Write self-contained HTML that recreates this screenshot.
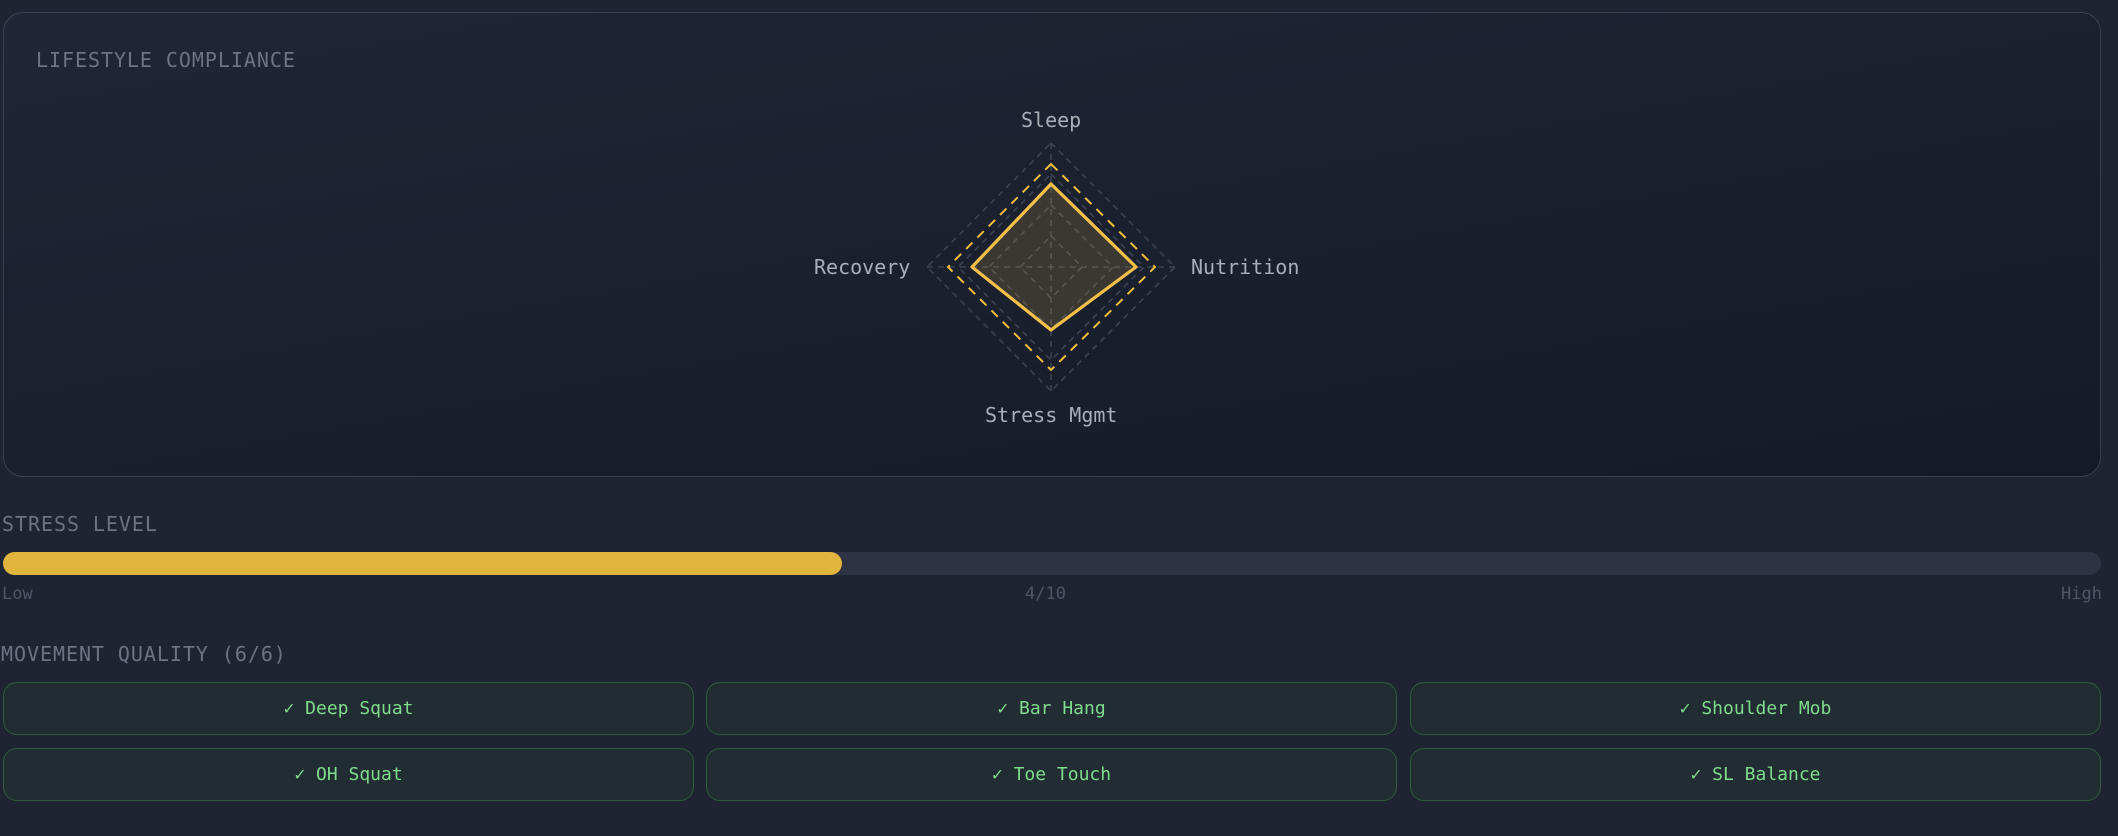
<!DOCTYPE html>
<html><head><meta charset="utf-8"><style>
*{box-sizing:border-box;margin:0;padding:0}
body{width:2118px;height:836px;background:#1f2432;font-family:"DejaVu Sans Mono","Liberation Mono",monospace;position:relative;overflow:hidden}
.panel{position:absolute;left:3px;top:12px;width:2098px;height:465px;border:1.5px solid #3a4050;border-radius:20px;background:linear-gradient(170deg,#202636 0%,#1a1f2d 60%,#161a26 100%)}
.t{position:absolute;font-size:20px;letter-spacing:0.95px;color:#6d7383;white-space:nowrap}
.lab{position:absolute;font-size:20px;color:#a9aeb9;white-space:nowrap}
.bar{position:absolute;left:3px;top:552px;width:2098px;height:23px;border-radius:12px;background:#2d3342}
.fill{position:absolute;left:0;top:0;height:23px;width:839px;border-radius:12px;background:#e1b43e}
.sm{position:absolute;top:584px;font-size:17px;color:#4f5666}
.btn{position:absolute;width:691px;height:53px;border:1.5px solid #2f5a3b;border-radius:14px;background:#212d33;color:#7fdc8c;font-size:18px;display:flex;align-items:center;justify-content:center}
</style></head><body>
<div class="panel"></div>
<div class="t" style="left:36px;top:48px">LIFESTYLE COMPLIANCE</div>
<svg style="position:absolute;left:0;top:0" width="2118" height="500">
<g fill="none" stroke="#3c4353" stroke-width="1.6" stroke-dasharray="6 5">
<polygon points="1051,143 1175,267 1051,391 927,267"/>
<polygon points="1051,174 1144,267 1051,360 958,267"/>
<polygon points="1051,205 1113,267 1051,329 989,267"/>
<polygon points="1051,236 1082,267 1051,298 1020,267"/>
<line x1="1051" y1="143" x2="1051" y2="391"/>
<line x1="927" y1="267" x2="1175" y2="267"/>
</g>
<polygon points="1051,164 1155,267 1051,370 948,267" fill="none" stroke="#f0bf3c" stroke-width="2" stroke-dasharray="9 7"/>
<polygon points="1051,184 1136,267 1051,330 972,267" fill="rgba(230,185,70,0.16)" stroke="#f5c04a" stroke-width="3.2" stroke-linejoin="round"/>
</svg>
<div class="lab" style="left:1021px;top:108px">Sleep</div>
<div class="lab" style="left:814px;top:255px">Recovery</div>
<div class="lab" style="left:1191px;top:255px">Nutrition</div>
<div class="lab" style="left:985px;top:403px">Stress Mgmt</div>
<div class="t" style="left:2px;top:512px">STRESS LEVEL</div>
<div class="bar"><div class="fill"></div></div>
<div class="sm" style="left:2px">Low</div>
<div class="sm" style="left:1025px">4/10</div>
<div class="sm" style="left:2061px">High</div>
<div class="t" style="left:1px;top:642px">MOVEMENT QUALITY (6/6)</div>
<div class="btn" style="left:3px;top:682px">✓ Deep Squat</div>
<div class="btn" style="left:706px;top:682px">✓ Bar Hang</div>
<div class="btn" style="left:1410px;top:682px">✓ Shoulder Mob</div>
<div class="btn" style="left:3px;top:748px">✓ OH Squat</div>
<div class="btn" style="left:706px;top:748px">✓ Toe Touch</div>
<div class="btn" style="left:1410px;top:748px">✓ SL Balance</div>
</body></html>
